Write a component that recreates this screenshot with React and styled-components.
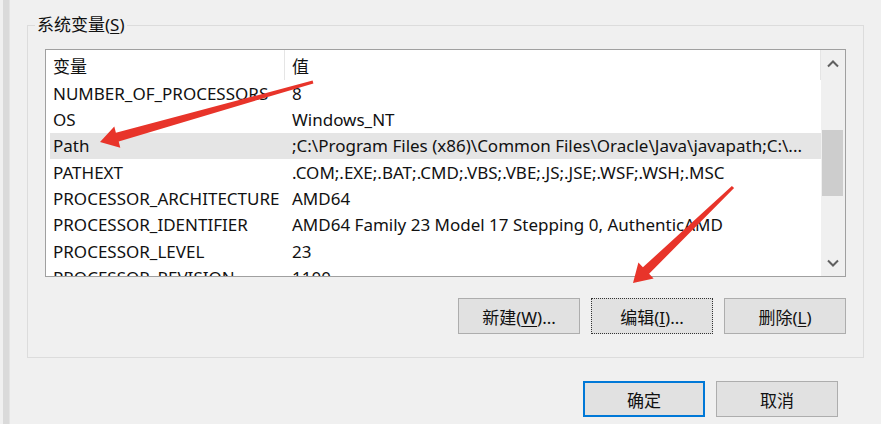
import React from 'react';
import styled, { createGlobalStyle } from 'styled-components';

const GlobalStyle = createGlobalStyle`
    html, body {
        margin: 0;
        padding: 0;
        background: #f0f0f0;
    }
    body {
        font-family: "Noto Sans", "Noto Sans CJK SC", sans-serif;
        color: #111;
    }
`;

const Page = styled.div`
    position: relative;
    display: flex;
    width: 881px;
    height: 424px;
    overflow: hidden;
    background: #f0f0f0;
`;

const EdgeStrip = styled.div`
    margin-left: 3px;
    width: 6px;
    background: #dadada;
    border-right: 1px solid #e4e4e4;
`;

const Dialog = styled.div`
    display: flex;
    flex-direction: column;
    padding-left: 17px;
    padding-top: 15px;
`;

const GroupBox = styled.fieldset`
    margin: 0;
    padding: 0;
    width: 837px;
    box-sizing: border-box;
    border: 1px solid #dcdcdc;
`;

const Legend = styled.legend`
    margin-left: 7px;
    padding: 0 2px;
    font-size: 17px;
    line-height: 20px;
`;

const GroupBody = styled.div`
    padding: 14px 17px 23px 17px;
`;

const ListView = styled.div`
    display: flex;
    height: 228px;
    box-sizing: border-box;
    border: 1px solid #a0a0a0;
    background: #fff;
`;

const ListMain = styled.div`
    flex: 1;
    overflow: hidden;
    font-size: 17px;
`;

const Row = styled.div`
    display: flex;
    align-items: center;
    height: ${p => (p.header ? '30px' : '26.33px')};
    margin-left: 4px;
    background: ${p => (p.selected ? '#e5e5e5' : 'transparent')};
    white-space: nowrap;
`;

const NameCell = styled.div`
    width: 235px;
    box-sizing: border-box;
    padding-left: 3px;
    align-self: stretch;
    display: flex;
    align-items: center;
    border-right: ${p => (p.header ? '1px solid #e5e5e5' : 'none')};
`;

const ValueCell = styled.div`
    flex: 1;
    padding-left: 7px;
    align-self: stretch;
    display: flex;
    align-items: center;
    border-right: ${p => (p.header ? '1px solid #e5e5e5' : 'none')};
`;

const ScrollBar = styled.div`
    width: 24px;
    display: flex;
    flex-direction: column;
    background: #f0f0f0;
`;

const ArrowBtn = styled.div`
    height: 27px;
    display: flex;
    align-items: center;
    justify-content: center;
`;

const Track = styled.div`
    flex: 1;
`;

const Thumb = styled.div`
    margin: ${p => p.offset}px 2px 0 1px;
    height: 66px;
    background: #cdcdcd;
`;

const ButtonRow = styled.div`
    display: flex;
    justify-content: flex-end;
    gap: ${p => p.gap}px;
    margin-top: ${p => p.top}px;
    padding-right: ${p => p.right}px;
`;

const Button = styled.button`
    width: 122px;
    height: ${p => p.h}px;
    box-sizing: border-box;
    padding: 0;
    font-family: "Noto Sans", "Noto Sans CJK SC", sans-serif;
    font-size: 17px;
    color: #111;
    background: #e1e1e1;
    border: ${p => (p.primary ? '2px solid #0078d7' : p.focused ? '1px dotted #333' : '1px solid #adadad')};
    border-radius: 0;
`;

const Key = styled.span`
    text-decoration: underline;
    text-underline-offset: 2px;
`;

const Overlay = styled.svg`
    position: absolute;
    left: 0;
    top: 0;
    pointer-events: none;
`;

const Chevron = ({ down }) => (
    <svg width="12" height="8" viewBox="0 0 12 8">
        <path
            d={down ? 'M1 1.5 L6 6.5 L11 1.5' : 'M1 6.5 L6 1.5 L11 6.5'}
            fill="none"
            stroke="#606060"
            strokeWidth="2"
        />
    </svg>
);

const vars = [
    ['NUMBER_OF_PROCESSORS', '8'],
    ['OS', 'Windows_NT'],
    ['Path', ';C:\\Program Files (x86)\\Common Files\\Oracle\\Java\\javapath;C:\\...'],
    ['PATHEXT', '.COM;.EXE;.BAT;.CMD;.VBS;.VBE;.JS;.JSE;.WSF;.WSH;.MSC'],
    ['PROCESSOR_ARCHITECTURE', 'AMD64'],
    ['PROCESSOR_IDENTIFIER', 'AMD64 Family 23 Model 17 Stepping 0, AuthenticAMD'],
    ['PROCESSOR_LEVEL', '23'],
    ['PROCESSOR_REVISION', '1100'],
];

const App = () => {
    return (
        <>
            <GlobalStyle />
            <Page>
                <EdgeStrip />
                <Dialog>
                    <GroupBox>
                        <Legend>系统变量(<Key>S</Key>)</Legend>
                        <GroupBody>
                            <ListView>
                                <ListMain>
                                    <Row header>
                                        <NameCell header>变量</NameCell>
                                        <ValueCell header>值</ValueCell>
                                    </Row>
                                    {vars.map(([name, value]) => (
                                        <Row key={name} selected={name === 'Path'}>
                                            <NameCell>{name}</NameCell>
                                            <ValueCell>{value}</ValueCell>
                                        </Row>
                                    ))}
                                </ListMain>
                                <ScrollBar>
                                    <ArrowBtn><Chevron /></ArrowBtn>
                                    <Track><Thumb offset={53} /></Track>
                                    <ArrowBtn><Chevron down /></ArrowBtn>
                                </ScrollBar>
                            </ListView>
                            <ButtonRow gap={11} top={21} right={0}>
                                <Button h={36}>新建(<Key>W</Key>)...</Button>
                                <Button h={36} focused>编辑(<Key>I</Key>)...</Button>
                                <Button h={36}>删除(<Key>L</Key>)</Button>
                            </ButtonRow>
                        </GroupBody>
                    </GroupBox>
                    <ButtonRow gap={11} top={23} right={26}>
                        <Button h={36} primary>确定</Button>
                        <Button h={36}>取消</Button>
                    </ButtonRow>
                </Dialog>
                <Overlay width="881" height="424" viewBox="0 0 881 424">
                    <polygon
                        fill="#e8342a"
                        points="312.6,80.6 115.9,132.8 114.3,126.6 100,142 120.3,147.7 118.7,141.4 313.4,83.4"
                    />
                    <polygon
                        fill="#e8342a"
                        points="731.9,185.9 642.9,267.3 638.4,262.6 633,283 653.6,278.4 649.1,273.7 734.1,188.1"
                    />
                </Overlay>
            </Page>
        </>
    );
};

export default App;
